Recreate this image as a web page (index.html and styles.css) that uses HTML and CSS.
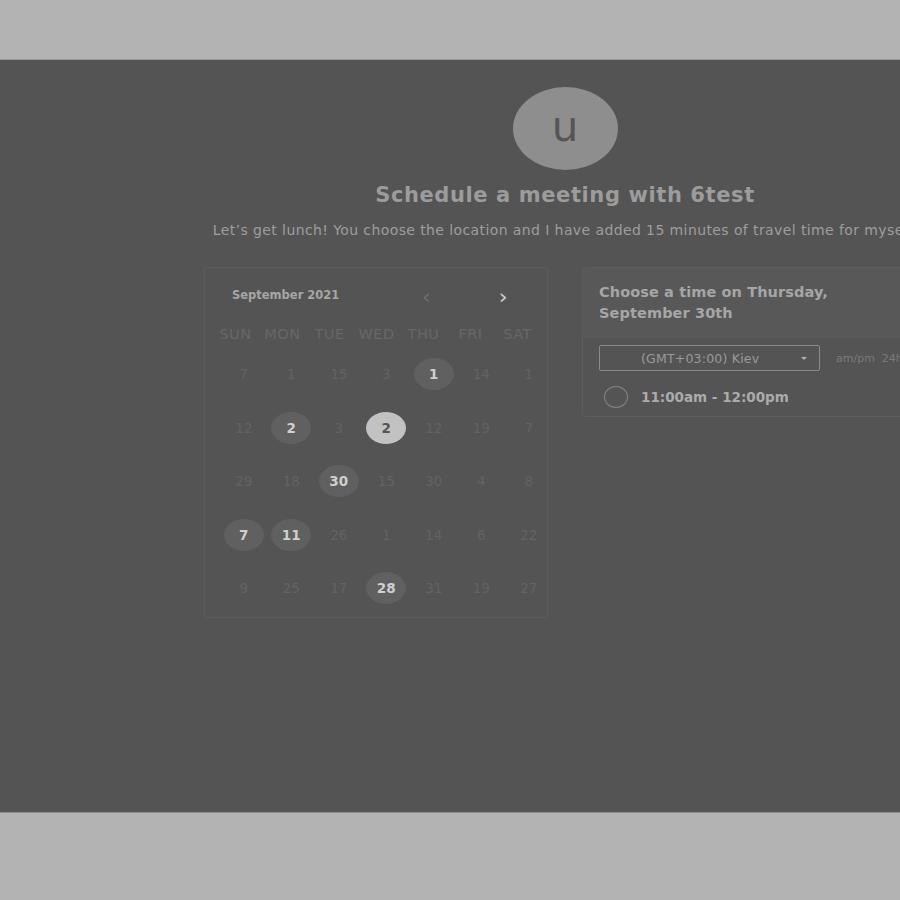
FILE: index.html
```html
<!DOCTYPE html>
<html>
<head>
<meta charset="utf-8">
<link rel="stylesheet" href="styles.css">
</head>
<body>
<div class="top-band"></div>
<main class="stage">
  <div class="content">
    <div class="avatar">u</div>
    <h1 class="title">Schedule a meeting with 6test</h1>
    <p class="subtitle">Let’s get lunch! You choose the location and I have added 15 minutes of travel time for myself.</p>
    <div class="cards">
      <section class="calendar">
        <div class="cal-head">
          <span class="month">September 2021</span>
          <span class="nav nav-prev">&lsaquo;</span>
          <span class="nav nav-next">&rsaquo;</span>
        </div>
        <div class="weekdays">
          <span>SUN</span><span>MON</span><span>TUE</span><span>WED</span><span>THU</span><span>FRI</span><span>SAT</span>
        </div>
        <div class="dates">
          <span>7</span><span>1</span><span>15</span><span>3</span><span class="on">1</span><span>14</span><span>1</span>
          <span>12</span><span class="on">2</span><span>3</span><span class="sel">2</span><span>12</span><span>19</span><span>7</span>
          <span>29</span><span>18</span><span class="on">30</span><span>15</span><span>30</span><span>4</span><span>8</span>
          <span class="on">7</span><span class="on">11</span><span>26</span><span>1</span><span>14</span><span>6</span><span>22</span>
          <span>9</span><span>25</span><span>17</span><span class="on">28</span><span>31</span><span>19</span><span>27</span>
        </div>
      </section>
      <section class="times">
        <div class="times-head">Choose a time on Thursday,<br>September 30th</div>
        <div class="times-body">
          <div class="tz-row">
            <div class="tz-select"><span>(GMT+03:00) Kiev</span><span class="caret"></span></div>
            <span class="fmt">am/pm&nbsp;&nbsp;24hr</span>
          </div>
          <div class="slot"><span class="radio"></span><span class="slot-text">11:00am - 12:00pm</span></div>
        </div>
      </section>
    </div>
  </div>
</main>
<div class="bottom-band"></div>
</body>
</html>
```
FILE: styles.css
```css
html, body {
  margin: 0;
  padding: 0;
  background: #b3b3b3;
  overflow: hidden;
  height: 900px;
}
.top-band { height: 60px; border-bottom: 1px solid #9a9a9a; box-sizing: border-box; }
.bottom-band { height: 88px; border-top: 1px solid #8e8e8e; box-sizing: border-box; }
.stage {
  height: 752px;
  background: #545454;
  overflow: hidden;
  font-family: "DejaVu Sans", Roboto, sans-serif;
}
.content {
  width: 722px;
  margin-left: 204px;
  padding-top: 27px;
  display: flex;
  flex-direction: column;
  align-items: center;
}
.avatar {
  width: 105px;
  height: 83px;
  border-radius: 50%;
  background: #8e8e8e;
  color: #555;
  font-family: "DejaVu Sans", sans-serif;
  font-size: 42px;
  line-height: 80px;
  text-align: center;
}
.title {
  margin: 12px 0 0;
  font-size: 21px;
  letter-spacing: 0.6px;
  line-height: 26px;
  font-weight: 700;
  color: #9c9c9c;
}
.subtitle {
  margin: 13px 0 0;
  font-size: 14px;
  letter-spacing: 0.4px;
  line-height: 18px;
  color: #9e9e9e;
  white-space: nowrap;
}
.cards {
  margin-top: 28px;
  width: 100%;
  display: flex;
  gap: 34px;
  align-items: flex-start;
}
.calendar {
  width: 344px;
  height: 351px;
  box-sizing: border-box;
  border: 1px solid #5c5c5c;
  border-radius: 3px;
  background: #545454;
}
.cal-head {
  display: flex;
  align-items: center;
  height: 54px;
  padding-left: 27px;
}
.month {
  font-size: 11.5px;
  font-weight: 700;
  color: #a6a6a6;
  width: 188px;
}
.nav {
  font-size: 22px;
  line-height: 20px;
  margin-top: 4px;
}
.nav-prev { color: #6e6e6e; margin-left: 2px; }
.nav-next { color: #cfcfcf; margin-left: 68px; }
.weekdays {
  display: grid;
  grid-template-columns: repeat(7, 47px);
  padding-left: 7px;
  font-size: 14.5px;
  letter-spacing: 0.5px;
  color: #676767;
  text-align: center;
  height: 24px;
  line-height: 24px;
}
.dates {
  display: grid;
  grid-template-columns: repeat(7, 47.5px);
  grid-auto-rows: 53.5px;
  margin-left: 15px;
  margin-top: -8px;
  font-size: 13.5px;
  color: #636363;
  width: 332px;
}
.dates span {
  display: flex;
  align-items: center;
  justify-content: center;
  width: 40px;
  height: 32px;
  margin: 20px auto 0;
  border-radius: 50%;
}
.dates .on {
  background: #606060;
  color: #cfcfcf;
  font-weight: 700;
}
.dates .sel {
  background: #c2c2c2;
  color: #555;
  font-weight: 700;
}
.times {
  width: 344px;
  flex: none;
  box-sizing: border-box;
  border: 1px solid #5c5c5c;
  border-radius: 3px;
  background: #545454;
}
.times-head {
  background: #585858;
  height: 70px;
  box-sizing: border-box;
  padding: 14px 0 0 16px;
  font-size: 14.5px;
  letter-spacing: 0.1px;
  line-height: 21px;
  font-weight: 700;
  color: #a6a6a6;
}
.times-body { padding: 7px 0 8px 16px; }
.tz-row { display: flex; align-items: center; }
.tz-select {
  width: 221px;
  height: 26px;
  box-sizing: border-box;
  border: 1px solid #8a8a8a;
  border-radius: 2px;
  display: flex;
  align-items: center;
  position: relative;
  font-size: 12.5px;
  letter-spacing: 0.2px;
  color: #9a9a9a;
}
.tz-select span:first-child { margin-left: 41px; }
.caret {
  position: absolute;
  right: 12px;
  top: 11px;
  border-left: 3px solid transparent;
  border-right: 3px solid transparent;
  border-top: 3px solid #b0b0b0;
}
.fmt { margin-left: 16px; font-size: 11px; color: #7a7a7a; white-space: nowrap; }
.slot { display: flex; align-items: center; margin-top: 15px; height: 22px; }
.radio {
  width: 24px;
  height: 22px;
  box-sizing: border-box;
  border: 1.5px solid #858585;
  border-radius: 50%;
  margin-left: 5px;
}
.slot-text {
  margin-left: 13px;
  font-size: 13.5px;
  font-weight: 700;
  color: #ababab;
}
```
